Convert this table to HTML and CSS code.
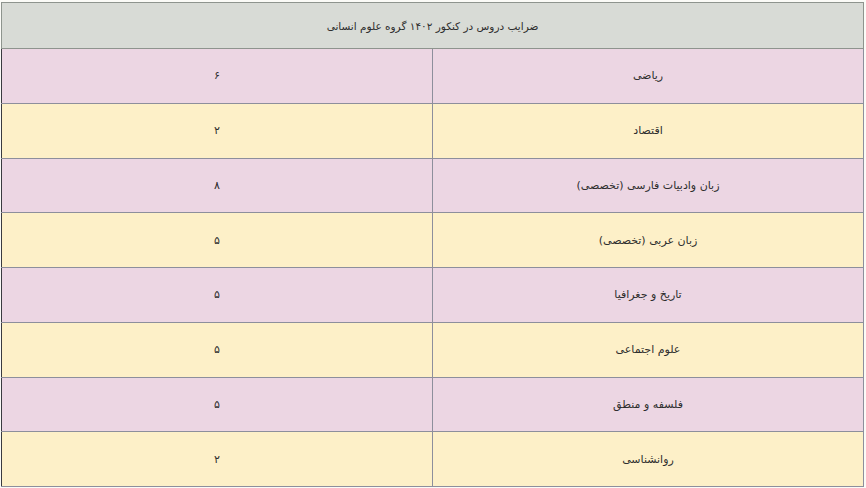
FILE: index.html
```html
<!DOCTYPE html>
<html lang="fa" dir="rtl">
<head>
<meta charset="utf-8">
<link rel="stylesheet" href="styles.css">
</head>
<body>
<div class="wrap">
<table class="coef">
<thead>
<tr class="head"><th colspan="2">ضرایب دروس در کنکور ۱۴۰۲ گروه علوم انسانی</th></tr>
</thead>
<tbody>
<tr class="pink"><td>ریاضی</td><td>۶</td></tr>
<tr class="yellow"><td>اقتصاد</td><td>۲</td></tr>
<tr class="pink"><td>زبان وادبیات فارسی (تخصصی)</td><td>۸</td></tr>
<tr class="yellow"><td>زبان عربی (تخصصی)</td><td>۵</td></tr>
<tr class="pink"><td>تاریخ و جغرافیا</td><td>۵</td></tr>
<tr class="yellow"><td>علوم اجتماعی</td><td>۵</td></tr>
<tr class="pink"><td>فلسفه و منطق</td><td>۵</td></tr>
<tr class="yellow"><td>روانشناسی</td><td>۲</td></tr>
</tbody>
</table>
</div>
</body>
</html>
```
FILE: styles.css
```css
html, body {
  margin: 0;
  padding: 0;
  background: #fbfbf7;
}
.wrap {
  padding: 2px 2px 1px 1px;
}
.coef {
  width: 863px;
  border-collapse: collapse;
  font-family: "DejaVu Sans", "Noto Sans", sans-serif;
  font-size: 11px;
  color: #2e2e2e;
  table-layout: fixed;
}
.coef th, .coef td {
  border: 1px solid #8d8f9c;
  text-align: center;
  vertical-align: middle;
  padding: 0;
  font-weight: normal;
}
.coef td {
  width: 50%;
}
.head th {
  height: 45px;
  font-size: 10.5px;
  background: #d8dbd6;
  border-color: #8e948e;
}
.coef tbody tr {
  height: 54.75px;
}
.pink td {
  background: #ecd6e3;
}
.yellow td {
  background: #fdf0c8;
}
.coef tbody td:last-child {
  border-left-color: #3a3a40;
}
```
